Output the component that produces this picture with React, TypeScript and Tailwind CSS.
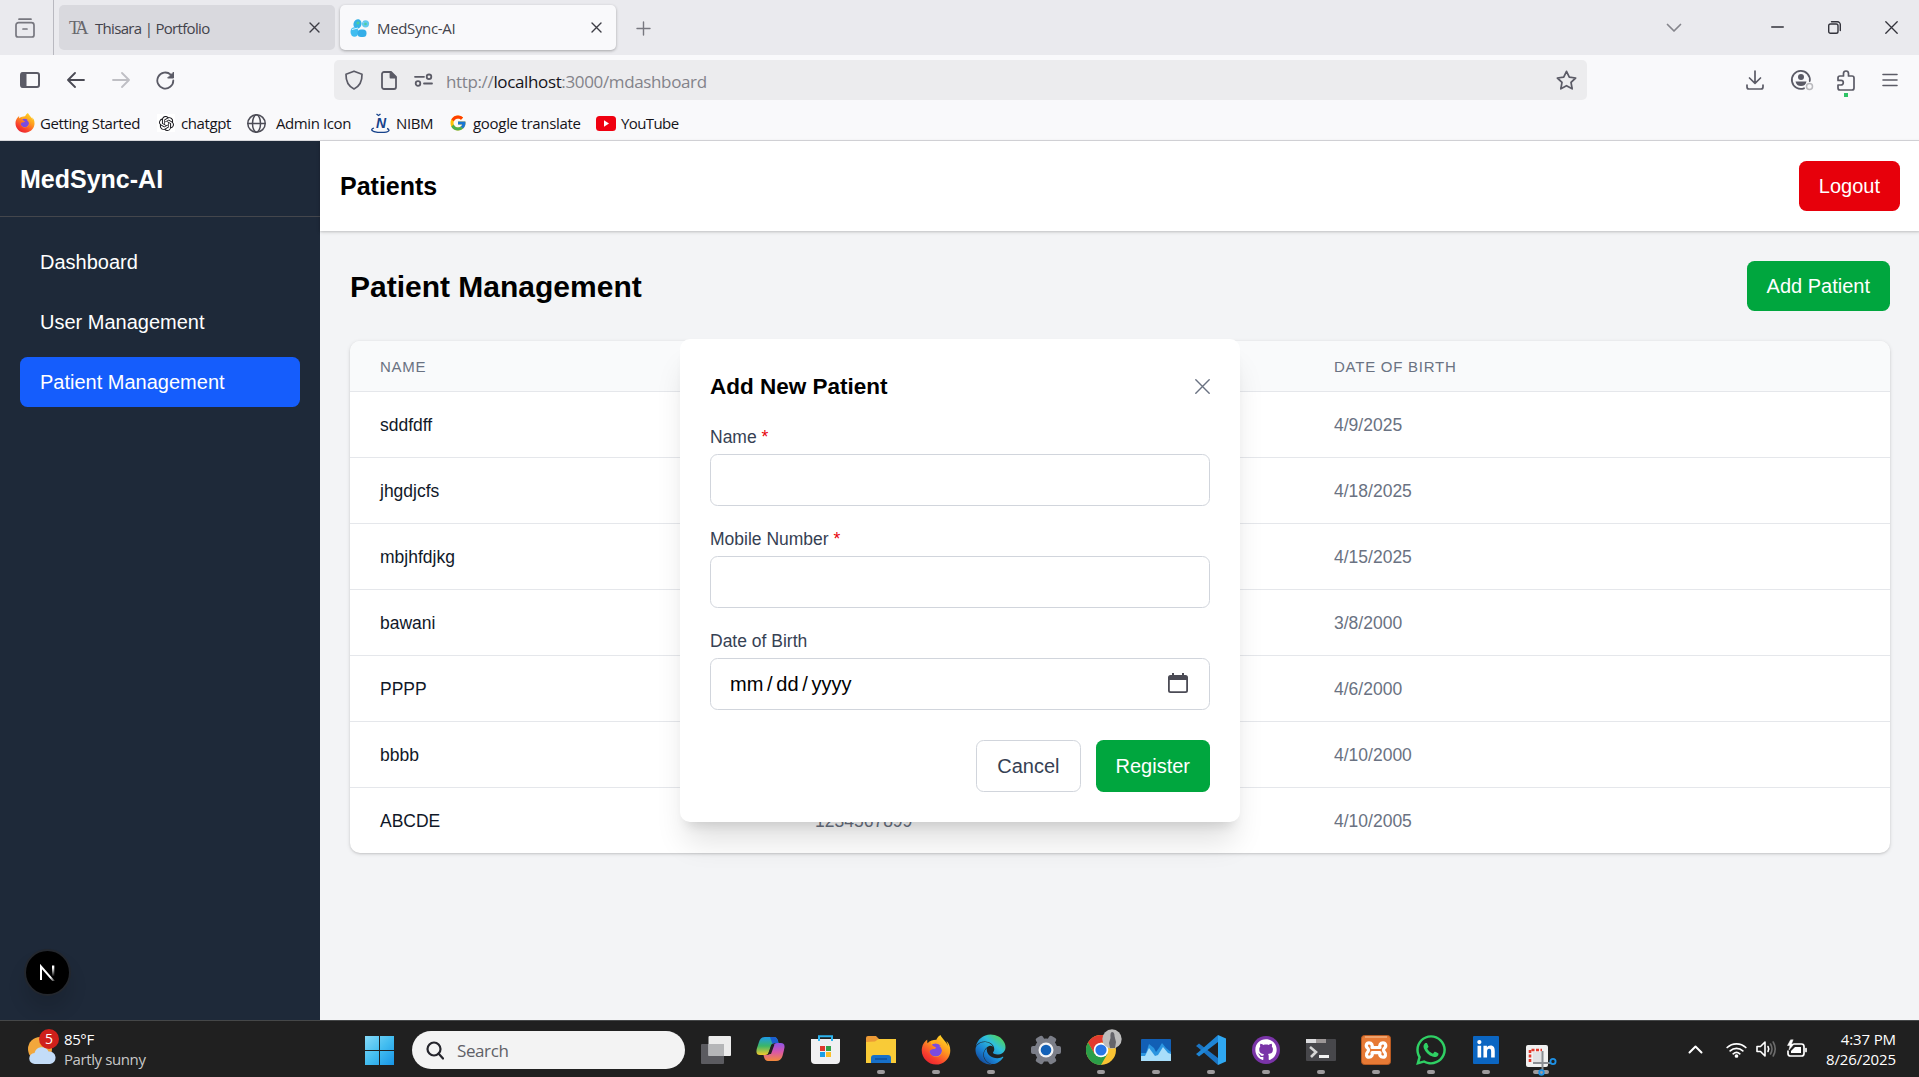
import React from 'react';
import { FcGoogle } from 'react-icons/fc';
import { SiOpenai } from 'react-icons/si';
import { FaEdge, FaFirefoxBrowser, FaGithub, FaWhatsapp, FaLinkedinIn } from 'react-icons/fa';

type BoxProps = {
  w: number;
  h: number;
  vb?: string;
  className?: string;
  sw?: number;
  children: React.ReactNode;
};

function Line({ w, h, vb, className = '', sw = 1.6, children }: BoxProps) {
  return (
    <svg
      width={w}
      height={h}
      viewBox={vb ?? `0 0 ${w} ${h}`}
      fill="none"
      stroke="currentColor"
      strokeWidth={sw}
      strokeLinecap="round"
      strokeLinejoin="round"
      className={`shrink-0 ${className}`}
    >
      {children}
    </svg>
  );
}

function FirefoxLogo({ size, className = '' }: { size: number; className?: string }) {
  return (
    <span className={`grid shrink-0 place-items-center ${className}`}>
      <svg width={size} height={size} viewBox="0 0 32 32" className="col-start-1 row-start-1">
        <circle cx="16" cy="17" r="12" fill="#ffb01f" />
        <circle cx="15.500" cy="16" r="7" fill="#7a4be0" />
      </svg>
      <FaFirefoxBrowser size={size} fill="url(#firefox-grad)" className="col-start-1 row-start-1" />
    </span>
  );
}

function Gradients() {
  return (
    <svg width="0" height="0" className="absolute">
      <defs>
        <linearGradient id="firefox-grad" x1="0.85" y1="0" x2="0.2" y2="1">
          <stop offset="0" stopColor="#ffe226" />
          <stop offset="0.4" stopColor="#ff9a1f" />
          <stop offset="0.75" stopColor="#f8402e" />
          <stop offset="1" stopColor="#e8202f" />
        </linearGradient>
        <linearGradient id="edge-grad" x1="1" y1="0.15" x2="0.3" y2="1">
          <stop offset="0" stopColor="#54d64a" />
          <stop offset="0.35" stopColor="#2fbfdc" />
          <stop offset="0.7" stopColor="#1a83d4" />
          <stop offset="1" stopColor="#144e9e" />
        </linearGradient>
      </defs>
    </svg>
  );
}

function TabStrip() {
  return (
    <div className="flex h-[55px] items-center bg-[#eaeaee] text-[#5b5b66]">
      <div className="flex h-full w-[54px] items-center border-r border-[#b9b9c0] pl-[15px]">
        <Line w={20} h={20} sw={1.7} className="text-[#77777f]">
          <path d="M4 1.200h12M3.500 4.700h13a2.500 2.500 0 0 1 2.500 2.500V17a2 2 0 0 1-2 2H3a2 2 0 0 1-2-2V7.200a2.500 2.500 0 0 1 2.500-2.500zM8 11h4" />
        </Line>
      </div>
      <div className="ml-[5px] flex h-[45px] w-[276px] items-center rounded-[5px] bg-[#d9d9de] pl-[10px] pr-[15px]">
        <span className="w-5 whitespace-nowrap font-['Liberation_Serif',serif] text-[18px] leading-6 tracking-[-3px] text-[#67676c]">
          TA
        </span>
        <span className="ml-[6px] pt-[2px] text-[15px] tracking-[-0.68px] text-[#43434b]">Thisara | Portfolio</span>
        <Line w={11} h={11} sw={1.4} className="ml-auto text-[#3d3d45]">
          <path d="M1 1l9 9M10 1l-9 9" />
        </Line>
      </div>
      <div className="ml-[5px] flex h-[45px] w-[276px] items-center rounded-[5px] bg-[#f9f9fb] pl-[10px] pr-[14px] shadow-[0_1px_3px_rgba(0,0,0,0.3)]">
        <svg width="20" height="18" viewBox="0 0 20 18" className="shrink-0">
          <ellipse cx="7.500" cy="5" rx="4" ry="4.800" fill="#35b3e6" transform="rotate(15 7.500 5)" />
          <circle cx="15.500" cy="4.800" r="3.600" fill="#63c9ee" />
          <ellipse cx="4.500" cy="13" rx="4" ry="4.800" fill="#41bdf0" />
          <rect x="7.500" y="10.500" width="9" height="7.500" rx="3.500" fill="#35aee8" />
          <path d="M2 10.500l6-1.500M11.500 1.500l1.500 2" stroke="#dff6ff" strokeWidth="1" />
          <circle cx="8" cy="4" r="1.500" fill="#4fce9b" />
          <circle cx="15.500" cy="5" r="1.300" fill="#4fce9b" />
        </svg>
        <span className="ml-[7px] pt-[2px] text-[15px] tracking-[-0.35px] text-[#43434b]">MedSync-AI</span>
        <Line w={11} h={11} sw={1.4} className="ml-auto text-[#3d3d45]">
          <path d="M1 1l9 9M10 1l-9 9" />
        </Line>
      </div>
      <Line w={15} h={15} sw={1.4} className="ml-5 mt-px text-[#77777f]">
        <path d="M7.500 1v13M1 7.500h13" />
      </Line>
      <div className="ml-auto flex items-center pr-[21px] text-[#33333b]">
        <Line w={16} h={10} sw={1.7} className="mr-[89px] text-[#85858c]">
          <path d="M1.500 1.500L8 8l6.500-6.500" />
        </Line>
        <Line w={13} h={13} sw={1.3} className="mr-11">
          <path d="M.7 6h11.600" />
        </Line>
        <Line w={13} h={13} sw={1.4} className="mr-11">
          <rect x=".7" y="3" width="9.300" height="9.300" rx="1.800" />
          <path d="M3.500.8H9.500a2.800 2.800 0 0 1 2.800 2.800V9.500" />
        </Line>
        <Line w={13} h={13} sw={1.3}>
          <path d="M.8.8l11.400 11.400M12.200.8L.8 12.200" />
        </Line>
      </div>
    </div>
  );
}

function AddressRow() {
  return (
    <div className="flex h-[50px] items-center text-[#5b5b66]">
      <Line w={20} h={16} sw={2} className="ml-5">
        <rect x="1" y="1" width="18" height="14" rx="2" />
        <path d="M2 1.500h3.500v13H2z" fill="currentColor" />
      </Line>
      <Line w={18} h={16} sw={1.8} className="ml-[27px] text-[#4a4a54]">
        <path d="M17 8H1.500M8 1L1 8l7 7" />
      </Line>
      <Line w={18} h={16} sw={1.8} className="ml-[27px] text-[#bfbfc4]">
        <path d="M1 8h15.500M10 1l7 7-7 7" />
      </Line>
      <Line w={19} h={19} sw={1.8} className="ml-[26px]">
        <path d="M17.300 9.500a8 8 0 1 1-2.600-5.900L17 6" />
        <path d="M17.500 1.500V7H12z" fill="currentColor" strokeWidth="1" />
      </Line>
      <div className="ml-[159px] flex h-10 w-[1253px] items-center rounded-[5px] bg-[#ececee] px-[10px]">
        <Line w={20} h={20} sw={1.7}>
          <path d="M10 1.200l8 3c.2 6.500-1.500 11.500-8 14.800C3.500 15.700 1.800 10.700 2 4.200z" />
        </Line>
        <Line w={16} h={19} sw={1.8} className="ml-[17px]">
          <path d="M3 1h7l5 5v10a2 2 0 0 1-2 2H3a2 2 0 0 1-2-2V3a2 2 0 0 1 2-2z" />
          <path d="M9.500 1.500v5h5z" fill="currentColor" />
        </Line>
        <Line w={19} h={14} sw={1.8} className="ml-[17px]">
          <path d="M1 3.800h9M10 10.500h8" />
          <circle cx="15" cy="3.800" r="2.300" />
          <circle cx="4" cy="10.500" r="2.300" />
        </Line>
        <span className="ml-[13px] pt-[3px] text-[17px] tracking-[-0.36px] text-[#83838a]">
          http://<span className="text-[#15141a]">localhost</span>:3000/mdashboard
        </span>
        <Line w={21} h={20} vb="0 0 24 23" sw={2} className="ml-auto">
          <path d="M12 1.500l3.200 6.700 7.300 1-5.300 5.100 1.300 7.300L12 18.100l-6.500 3.500 1.300-7.300L1.500 9.200l7.300-1z" />
        </Line>
      </div>
      <Line w={18} h={20} sw={1.7} className="ml-auto">
        <path d="M9 1v12M3.500 8L9 13.300 14.500 8M1 15v2a2 2 0 0 0 2 2h12a2 2 0 0 0 2-2v-2" />
      </Line>
      <Line w={24} h={22} sw={1.8} className="ml-[26px]">
        <path d="M19.800 12A9 9 0 1 0 14 19.300" />
        <circle cx="11" cy="8" r="3" fill="currentColor" stroke="none" />
        <path d="M5.500 12.500h11q-1 4.500-5.500 4.500t-5.500-4.500z" fill="currentColor" stroke="none" />
        <circle cx="19.500" cy="17.500" r="3" stroke="#b9b9bd" strokeWidth="1.500" />
      </Line>
      <div className="relative ml-[23px]">
        <Line w={18} h={21} sw={1.7}>
          <path d="M6.500 6V3.500a2.500 2.500 0 0 1 5 0V6H15a2 2 0 0 1 2 2v10a2 2 0 0 1-2 2H3a2 2 0 0 1-2-2v-3h3a2.300 2.300 0 0 0 0-4.600H1V8a2 2 0 0 1 2-2z" />
        </Line>
        <span className="absolute left-[7px] top-[23px] size-1 bg-[#2fc466]" />
      </div>
      <Line w={16} h={14} sw={1.6} className="ml-[27px] mr-[21px]">
        <path d="M1 1.500h14M1 7h14M1 12.500h14" />
      </Line>
    </div>
  );
}

function Bookmarks() {
  return (
    <div className="flex h-9 items-center border-b border-[#d8d8dc] pt-px text-[15px] text-[#15141a]">
      <FirefoxLogo size={20} className="ml-[15px]" />
      <span className="ml-[5px] w-[101px] whitespace-nowrap tracking-[-0.4px]">Getting Started</span>
      <span className="ml-[16px] flex size-[18px] items-center justify-center bg-white">
        <SiOpenai size={15} />
      </span>
      <span className="ml-[6px] w-[51px] whitespace-nowrap tracking-[-0.4px]">chatgpt</span>
      <Line w={19} h={19} sw={1.5} className="ml-[15px] text-[#4d4d57]">
        <circle cx="9.500" cy="9.500" r="8.700" />
        <ellipse cx="9.500" cy="9.500" rx="4" ry="8.700" />
        <path d="M1 9.500h17" />
      </Line>
      <span className="ml-[10px] w-[76px] whitespace-nowrap tracking-[-0.4px]">Admin Icon</span>
      <span className="relative ml-[19px] flex h-5 w-[19px] items-center justify-center pl-px font-['Liberation_Sans',sans-serif] text-[14px] font-bold italic leading-none text-[#16428b]">
        N
        <svg width="19" height="20" viewBox="0 0 19 20" className="absolute left-0 top-0" fill="none" stroke="#16428b">
          <path d="M3 15q-3 1-2 2.500 2 2 9 2t8-2q0-1.500-2-2" strokeWidth="1.300" />
          <path d="M5.500 1l2 1.500 2-1.500" strokeWidth="1.300" />
        </svg>
      </span>
      <span className="ml-[6px] w-[37px] whitespace-nowrap tracking-[-0.4px]">NIBM</span>
      <FcGoogle size={18} className="ml-[16px]" />
      <span className="ml-[6px] w-[108px] whitespace-nowrap tracking-[-0.3px]">google translate</span>
      <svg width="20" height="15" viewBox="0 0 20 15" className="ml-[15px] shrink-0">
        <rect width="20" height="15" rx="3.500" fill="#f00010" />
        <path d="M8 4.300l5 3.200-5 3.200z" fill="#fff" />
      </svg>
      <span className="ml-[5px] whitespace-nowrap tracking-[-0.6px]">YouTube</span>
    </div>
  );
}

const NAV = ['Dashboard', 'User Management', 'Patient Management'];

function Sidebar() {
  return (
    <aside className="flex w-80 shrink-0 flex-col bg-[#1e2939] text-white">
      <div className="border-b border-[#44464c] px-5 pb-[19px] pt-[21px] text-[25px] font-bold leading-[35px]">
        MedSync-AI
      </div>
      <nav className="flex flex-col gap-2.5 p-5">
        {NAV.map((item) => (
          <a
            key={item}
            className={`rounded-[7.5px] px-5 py-2.5 text-[20px] leading-[30px] ${
              item === 'Patient Management' ? 'bg-[#155dfc]' : ''
            }`}
          >
            {item}
          </a>
        ))}
      </nav>
      <div className="mb-6 ml-6 mt-auto flex size-[47px] items-center justify-center rounded-full border-2 border-[#23272e] bg-black shadow-[0_14px_18px_rgba(0,0,0,0.12)]">
        <svg width="17" height="17" viewBox="0 0 17 17" fill="none" strokeWidth="2">
          <defs>
            <linearGradient id="n-stem" x1="0" y1="0" x2="0" y2="1">
              <stop offset="0.2" stopColor="#fff" />
              <stop offset="1" stopColor="#fff" stopOpacity="0" />
            </linearGradient>
            <linearGradient id="n-diag" x1="0" y1="0" x2="1" y2="1">
              <stop offset="0.7" stopColor="#fff" />
              <stop offset="1" stopColor="#fff" stopOpacity="0.1" />
            </linearGradient>
          </defs>
          <path d="M2 16V2.500L15.500 18" stroke="url(#n-diag)" />
          <rect x="13" y="1.500" width="2.300" height="11" fill="url(#n-stem)" />
        </svg>
      </div>
    </aside>
  );
}

const PATIENTS = [
  { name: 'sddfdff', mobile: '', dob: '4/9/2025' },
  { name: 'jhgdjcfs', mobile: '', dob: '4/18/2025' },
  { name: 'mbjhfdjkg', mobile: '', dob: '4/15/2025' },
  { name: 'bawani', mobile: '', dob: '3/8/2000' },
  { name: 'PPPP', mobile: '', dob: '4/6/2000' },
  { name: 'bbbb', mobile: '', dob: '4/10/2000' },
  { name: 'ABCDE', mobile: '1234567899', dob: '4/10/2005' },
];

function PatientTable() {
  return (
    <div className="mt-7.5 overflow-hidden rounded-[10px] bg-white shadow-[0_1px_4px_rgba(0,0,0,0.12),0_1px_2px_rgba(0,0,0,0.1)]">
      <div className="grid h-[50px] grid-cols-[435px_519px_1fr] items-center bg-[#f9fafb] pt-[2px] text-[15px] uppercase leading-5 tracking-[0.75px] text-[#6a7282]">
        <span className="pl-7.5">Name</span>
        <span />
        <span className="pl-7.5">Date of Birth</span>
      </div>
      {PATIENTS.map((p) => (
        <div
          key={p.name}
          className="grid h-[66px] grid-cols-[435px_519px_1fr] items-center border-t border-[#e5e7eb] pt-[2px] text-[17.5px] leading-[25px] text-[#6a7282]"
        >
          <span className="pl-7.5 text-[#101828]">{p.name}</span>
          <span className="pl-7.5">{p.mobile}</span>
          <span className="pl-7.5">{p.dob}</span>
        </div>
      ))}
    </div>
  );
}

function Field({ label, required, children }: { label: string; required?: boolean; children?: React.ReactNode }) {
  return (
    <div className="pt-[21px]">
      <div className="mb-1 text-[17.5px] leading-[25px] text-[#364153]">
        {label} {required && <span className="text-[#e7000b]">*</span>}
      </div>
      <div className="flex h-[52px] items-center rounded-[7.5px] border border-[#d1d5dc] px-[19px] text-[20px] text-black">
        {children}
      </div>
    </div>
  );
}

function PatientDialog() {
  return (
    <div className="absolute left-[680px] top-[198px] h-[483px] w-[560px] rounded-[10px] bg-white p-7.5 shadow-[0_25px_31px_-6px_rgba(0,0,0,0.12),0_10px_12px_-7px_rgba(0,0,0,0.12)]">
      <div className="flex h-[35px] items-center justify-between">
        <h3 className="text-[22.5px] font-bold leading-[35px]">Add New Patient</h3>
        <Line w={15} h={15} sw={1.4} className="text-[#6a7282]">
          <path d="M.8.8l13.400 13.400M14.200.8L.8 14.200" />
        </Line>
      </div>
      <Field label="Name" required />
      <Field label="Mobile Number" required />
      <Field label="Date of Birth">
        <span className="flex gap-[3.700px]">
          <span>mm</span>
          <span>/</span>
          <span>dd</span>
          <span>/</span>
          <span>yyyy</span>
        </span>
        <svg width="20" height="20" viewBox="0 0 20 20" className="-mt-[2px] ml-auto mr-[2px]" fill="#4b4b55">
          <path
            fillRule="evenodd"
            d="M4 0h2v2h8V0h2v2h1.500A2.500 2.500 0 0 1 20 4.500v13a2.500 2.500 0 0 1-2.500 2.500h-15A2.500 2.500 0 0 1 0 17.500v-13A2.500 2.500 0 0 1 2.500 2H4zM1.800 7v10.500q0 .7.700.7h15q.7 0 .7-.7V7z"
          />
        </svg>
      </Field>
      <div className="mt-7.5 flex justify-end gap-[15px] text-[20px]">
        <div className="flex h-[52px] items-center rounded-[7.5px] border border-[#d1d5dc] px-5 text-[#364153]">Cancel</div>
        <div className="flex h-[52px] items-center rounded-[7.5px] bg-[#00a63e] px-5 text-white">Register</div>
      </div>
    </div>
  );
}

function TaskCell({ bar = 'dot', children }: { bar?: 'dot' | 'none' | 'wide'; children: React.ReactNode }) {
  return (
    <div className="relative flex h-full w-[55px] shrink-0 items-center justify-center">
      {children}
      {bar !== 'none' && (
        <span
          className={`absolute bottom-[3px] h-1 rounded-full bg-[#9d9a9d] ${bar === 'wide' ? 'w-4' : 'w-2'}`}
        />
      )}
    </div>
  );
}

function TaskIcons() {
  return (
    <>
      <TaskCell bar="none">
        <svg width="30" height="28" viewBox="0 0 30 28">
          <rect y="8" width="23" height="20" rx="1" fill="#5b5b60" />
          <rect x="7.500" width="22.500" height="20" rx="1" fill="#ececec" />
          <path d="M7.500 8H23v12H7.500z" fill="#b5b6b8" />
        </svg>
      </TaskCell>
      <TaskCell bar="none">
        <svg width="30" height="28" viewBox="0 0 30 28" className="-mt-px">
          <defs>
            <linearGradient id="cp-a" x1="0" y1="0" x2="0" y2="1">
              <stop offset="0" stopColor="#1e9bea" />
              <stop offset="0.5" stopColor="#3bb667" />
              <stop offset="1" stopColor="#f4c92d" />
            </linearGradient>
            <linearGradient id="cp-b" x1="0" y1="0" x2="0" y2="1">
              <stop offset="0" stopColor="#8d55e8" />
              <stop offset="0.5" stopColor="#d957a8" />
              <stop offset="1" stopColor="#f38a3a" />
            </linearGradient>
          </defs>
          <path d="M9 2h9q3 0 4 4l.5 2H19q-3 0-4 3l-2 6q-1 3-4 3H4q-5 0-3-7L3 7q1.500-5 6-5z" fill="url(#cp-a)" />
          <path d="M14 2h4q3 0 4 4l.5 2H19q-1.500 0-2.500 1z" fill="#1b5fd0" />
          <path d="M20 26h-8q-3 0-4-4l-.5-2H11q3 0 4-3l2-6q1-3 4-3h4q5 0 3 7l-1.500 6q-1.500 5-6.500 5z" fill="url(#cp-b)" />
          <path d="M15.500 9.500h3L15 19h-3z" fill="#202020" />
        </svg>
      </TaskCell>
      <TaskCell bar="none">
        <svg width="29" height="29" viewBox="0 0 29 29">
          <path d="M0 4h29v21q0 4-4 4H4q-4 0-4-4z" fill="#f0f0f2" />
          <path d="M8 6V1.200h13V6" fill="none" stroke="#2db4ee" strokeWidth="2" />
          <path d="M9 11h5v5H9z" fill="#e0392d" />
          <path d="M15 11h5v5h-5z" fill="#34a04a" />
          <path d="M9 17h5v5H9z" fill="#1a9fe6" />
          <path d="M15 17h5v5h-5z" fill="#fbbf2b" />
        </svg>
      </TaskCell>
      <TaskCell>
        <svg width="30" height="28" viewBox="0 0 30 28">
          <path d="M0 2q0-2 2-2h8l3 3v6H0z" fill="#ec9a36" />
          <path d="M0 6l9-.500L12.500 3H30v24H0z" fill="#f9cb37" />
          <path d="M5 27v-5q0-3 3-3h14q3 0 3 3v5z" fill="#1770c9" />
          <path d="M9 23h12" stroke="#0e4f9c" strokeWidth="1.500" />
        </svg>
      </TaskCell>
      <TaskCell>
        <FirefoxLogo size={30} />
      </TaskCell>
      <TaskCell>
        <FaEdge size={31} fill="url(#edge-grad)" />
      </TaskCell>
      <TaskCell bar="none">
        <svg width="30" height="30" viewBox="-15 -15 30 30">
          <g fill="#7b7e88">
            {[0, 60, 120].map((a) => (
              <rect key={a} x="-4" y="-15" width="8" height="30" rx="2" transform={`rotate(${a + 30})`} />
            ))}
            <circle r="11.500" />
          </g>
          <circle r="7.500" fill="#f2f3f5" />
          <circle r="5.300" fill="#1261b8" />
        </svg>
      </TaskCell>
      <TaskCell>
        <svg width="36" height="36" viewBox="-18 -21 36 36" className="-mt-[6px] ml-[6px]">
          <g transform="translate(-3 0)">
            <circle r="15" fill="#f9c332" />
            <path d="M-13-7.500A15 15 0 0 1 13-7.500H0L-6.500 3.700z" fill="#e23a2e" />
            <path d="M-13-7.500A15 15 0 0 0 0 15L6.500 3.700-6.500 3.700z" fill="#2b9e48" />
            <circle r="7.300" fill="#fff" />
            <circle r="5.600" fill="#2876e6" />
          </g>
          <circle cx="8" cy="-11" r="9.700" fill="#bdbdbd" />
          <path d="M8-18q2.500 0 2.500 4l1.500 6-1 6H6l-1-5 1.500-5q-.5-6 1.500-6z" fill="#64646a" />
        </svg>
      </TaskCell>
      <TaskCell>
        <svg width="30" height="22" viewBox="0 0 30 22">
          <rect width="30" height="22" rx="1" fill="#125fb5" />
          <path d="M0 14h5l3-9 5 4 2 4 3-4 3-5 4 5 5 4v9H0z" fill="#2a95e0" />
          <path d="M0 17h4l4-8 6 8 3-1 5-8 5 6 3 1v7H0z" fill="#a8defa" />
        </svg>
      </TaskCell>
      <TaskCell>
        <svg width="30" height="30" viewBox="0 0 30 30">
          <path d="M0 11l3-2.500L22 23v7L2 12.500z" fill="#1b75c4" />
          <path d="M0 19l3 2.500L22 7V0L2 17.500z" fill="#1f86d6" />
          <path d="M22 0l8 3.500v23L22 30z" fill="#2fa8f2" />
        </svg>
      </TaskCell>
      <TaskCell>
        <span className="flex size-7 items-center justify-center rounded-full bg-[#7a34a8]">
          <FaGithub size={22} color="#fff" />
        </span>
      </TaskCell>
      <TaskCell>
        <svg width="30" height="22" viewBox="0 0 30 22">
          <rect width="30" height="22" rx="1" fill="#47474b" />
          <path d="M0 0h10v4H0z" fill="#dcdcde" />
          <path d="M10 0h10v4H10z" fill="#9b9696" />
          <path d="M4 8l6 5-5 5" fill="none" stroke="#d6d6d6" strokeWidth="2.600" />
          <path d="M13 16h10v3H13z" fill="#f2f2f2" />
        </svg>
      </TaskCell>
      <TaskCell>
        <svg width="30" height="30" viewBox="0 0 30 30">
          <rect x=".5" y=".5" width="29" height="29" rx="3" fill="#e77a35" stroke="#b85a22" />
          <path d="M4 2h22" stroke="#f6bd92" strokeWidth="1.200" />
          <path
            d="M11 12.500h8c-.8-2 .3-4.700 3-4.700s3.700 3.500 1.500 5.200c-1.300 1-1.300 3 0 4.200 2 2 1 5-1.500 5s-3.800-2.200-3-4.500h-8c.8 2.300-.5 4.500-3 4.500s-3.500-3-1.500-5c1.300-1.200 1.300-3.200 0-4.200C4.300 11.300 5.300 7.800 8 7.800s3.800 2.700 3 4.700z"
            fill="#e77a35"
            stroke="#fff"
            strokeWidth="3.200"
            strokeLinejoin="round"
          />
        </svg>
      </TaskCell>
      <TaskCell>
        <FaWhatsapp size={34} color="#2fd064" />
      </TaskCell>
      <TaskCell>
        <span className="flex h-7 w-[26px] items-center justify-center rounded-[1px] bg-[#0b66c2]">
          <FaLinkedinIn size={20} color="#fff" />
        </span>
      </TaskCell>
      <TaskCell bar="wide">
        <svg width="32" height="31" viewBox="0 0 32 31" className="relative z-10 mt-[22px]">
          <rect x="1" y="0" width="22" height="22" rx="2" fill="#f1f1f1" />
          <path d="M8 7h9v10H8z" fill="#e2e2e4" />
          <path d="M5 17V5H17" fill="none" stroke="#e33a2c" strokeWidth="2.600" strokeDasharray="3 1.500" />
          <path d="M17.500 6v19M8 18h18" stroke="#8a8d92" strokeWidth="2" />
          <circle cx="28" cy="16.500" r="2.600" fill="none" stroke="#1e90e4" strokeWidth="1.800" />
          <circle cx="16.500" cy="27.500" r="2.300" fill="none" stroke="#1e90e4" strokeWidth="1.800" />
        </svg>
      </TaskCell>
    </>
  );
}

function Taskbar() {
  return (
    <div className="flex h-[57px] items-center border-t border-[#454748] bg-[#202020] text-white">
      <div className="relative ml-7 mt-[2px] h-[30px] w-[28px] shrink-0">
        <svg width="28" height="30" viewBox="0 0 28 30">
          <circle cx="12" cy="14" r="12" fill="#f2a73c" />
          <path d="M7 29a5.500 5.500 0 0 1-.5-11 7.500 7.500 0 0 1 14-1.500A6 6 0 0 1 22 29z" fill="#c3dcf8" />
        </svg>
        <span className="absolute -top-[6px] left-[11px] flex size-5 items-center justify-center rounded-full bg-[#cf201b] text-[14px] leading-none">
          5
        </span>
      </div>
      <div className="ml-2 w-[293px] text-[15px] leading-5 tracking-[-0.4px]">
        <div>85°F</div>
        <div className="tracking-[-0.4px] text-[#c8c8c8]">Partly sunny</div>
      </div>
      <svg width="29" height="29" viewBox="0 0 29 29" className="ml-[8px] mt-[3px] shrink-0">
        <defs>
          <linearGradient id="win" x1="0" y1="0" x2="1" y2="1">
            <stop offset="0" stopColor="#86daf8" />
            <stop offset="0.5" stopColor="#43bdf0" />
            <stop offset="1" stopColor="#1795e6" />
          </linearGradient>
        </defs>
        <path d="M0 0h14v14H0zM15 0h14v14H15zM0 15h14v14H0zM15 15h14v14H15z" fill="url(#win)" />
      </svg>
      <div className="ml-[18px] mt-[2px] flex h-[38px] w-[273px] shrink-0 items-center rounded-full bg-[#f3f3f3] pl-[14px]">
        <Line w={18} h={19} sw={2.2} className="text-[#25252c]">
          <circle cx="8" cy="8" r="6.500" />
          <path d="M12.500 12.500L17 17.500" />
        </Line>
        <span className="ml-[13px] pt-[2px] text-[17px] tracking-[-0.4px] text-[#606066]">Search</span>
      </div>
      <div className="ml-[3px] flex h-full items-center pt-px">
        <TaskIcons />
      </div>
      <div className="ml-auto flex items-center pr-[23px]">
        <Line w={15} h={9} sw={2} className="mr-[23px]">
          <path d="M1.500 7.500l6-6 6 6" />
        </Line>
        <Line w={21} h={17} sw={1.7} className="mr-[9px]">
          <path d="M1.200 6.500a13.500 13.500 0 0 1 18.600 0M4.200 9.800a9.200 9.200 0 0 1 12.600 0M7.200 12.800a5 5 0 0 1 6.600 0" />
          <circle cx="10.500" cy="15" r="1" fill="currentColor" />
        </Line>
        <Line w={21} h={18} sw={1.6} className="mr-[9px]">
          <path d="M1 6.500h3.500L9 2v14l-4.500-4.500H1z" />
          <path d="M12 6.500q1.500 2.500 0 5" />
          <path d="M14.500 4q3 5 0 10M17.200 2q4 7 0 14" stroke="#6c6c6c" />
        </Line>
        <Line w={21} h={20} sw={1.7} className="mr-[19px]">
          <path d="M8 5h7.500a2.500 2.500 0 0 1 2.500 2.500v7a2.500 2.500 0 0 1-2.500 2.500h-11a2.500 2.500 0 0 1-2.500-2.500V12M20 9.500v3" />
          <path d="M9 8h6v6H5v-2z" fill="currentColor" stroke="none" />
          <path d="M4.500 1L1.500 6.500h2.500L3 11l5-6H5.500L7 1z" fill="currentColor" strokeWidth=".5" />
        </Line>
        <div className="w-[70px] text-right text-[15px] leading-5 tracking-[-0.12px]">
          <div>4:37 PM</div>
          <div>8/26/2025</div>
        </div>
      </div>
    </div>
  );
}

export default function App() {
  return (
    <div className="flex h-[1077px] w-full flex-col overflow-hidden bg-[#f9f9fb] font-['Open_Sans',sans-serif]">
      <Gradients />
      <TabStrip />
      <AddressRow />
      <Bookmarks />
      <div className="relative flex h-[879px] w-[1920px] shrink-0 bg-[#f3f4f6] font-['Liberation_Sans',Arial,sans-serif]">
        <Sidebar />
        <main className="flex flex-1 flex-col">
          <header className="flex h-[90px] shrink-0 items-center justify-between bg-white px-5 shadow-[0_1px_4px_rgba(0,0,0,0.14),0_1px_2px_rgba(0,0,0,0.1)]">
            <h1 className="pt-[2px] text-[25px] font-bold">Patients</h1>
            <div className="rounded-[7.5px] bg-[#e7000b] px-5 py-2.5 text-[20px] leading-[30px] text-white">Logout</div>
          </header>
          <section className="p-7.5">
            <div className="flex items-center justify-between">
              <h2 className="pt-[2px] text-[30px] font-bold leading-10">Patient Management</h2>
              <div className="rounded-[7.5px] bg-[#00a63e] px-5 py-2.5 text-[20px] leading-[30px] text-white">Add Patient</div>
            </div>
            <PatientTable />
          </section>
        </main>
        <PatientDialog />
      </div>
      <Taskbar />
    </div>
  );
}
